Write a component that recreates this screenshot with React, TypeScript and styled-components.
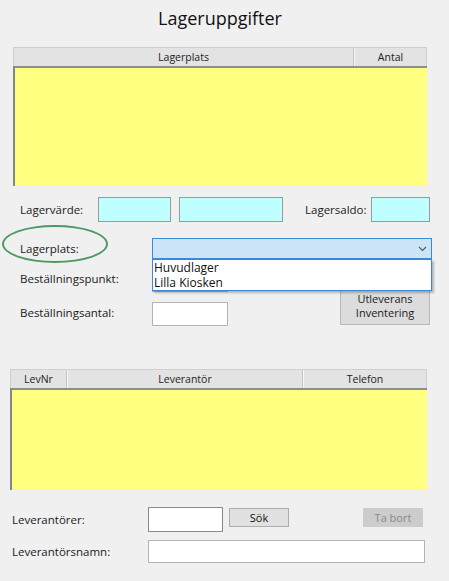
import styled, { createGlobalStyle } from 'styled-components'

const GlobalStyle = createGlobalStyle`
  body {
    margin: 0;
    background: #f0f0f0;
    font-family: "Open Sans", "Noto Sans", "Liberation Sans", sans-serif;
    color: #1a1a1a;
  }
`

const Page = styled.div`
  width: 449px;
  height: 581px;
  background: #f0f0f0;
  overflow: hidden;
`

const Title = styled.h1`
  margin: 0 0 10px 13px;
  width: 414px;
  height: 37px;
  line-height: 37px;
  font-size: 18px;
  font-weight: 400;
  text-align: center;
  color: #111;
`

const Grid = styled.div<{ $left: number; $width: number; $top: number }>`
  margin: ${p => p.$top}px 0 0 ${p => p.$left}px;
  width: ${p => p.$width}px;
`

const HeaderRow = styled.div<{ $cols: string }>`
  display: grid;
  grid-template-columns: ${p => p.$cols};
  height: 19px;
  border: 1px solid #cfcfcf;
  border-bottom: none;
  background: #e3e3e3;
  box-sizing: border-box;
`

const HeaderCell = styled.div`
  display: flex;
  align-items: center;
  justify-content: center;
  font-size: 10.5px;
  color: #222;
  border-left: 1px solid #f7f7f7;
  border-right: 1px solid #c4c4c4;
  &:first-child { border-left: none; }
  &:last-child { border-right: none; }
`

const GridBody = styled.div<{ $height: number }>`
  height: ${p => p.$height}px;
  background: #ffff80;
  border-left: 2px solid #858585;
  border-top: 2px solid #8e8e8e;
  box-sizing: border-box;
`

const Row = styled.div<{ $top: number; $height: number }>`
  position: relative;
  display: flex;
  align-items: center;
  margin-top: ${p => p.$top}px;
  height: ${p => p.$height}px;
`

const Label = styled.span<{ $left?: number; $width?: number }>`
  margin-left: ${p => p.$left ?? 0}px;
  width: ${p => (p.$width ? `${p.$width}px` : 'auto')};
  font-size: 11.5px;
  white-space: nowrap;
  flex-shrink: 0;
`

const ValueBox = styled.div<{ $left: number; $width: number; $height?: number }>`
  margin-left: ${p => p.$left}px;
  width: ${p => p.$width}px;
  height: ${p => p.$height ?? 25}px;
  background: #c0ffff;
  border: 1px solid #9a9a9a;
  box-sizing: border-box;
  flex-shrink: 0;
`

const TextInput = styled.div<{ $left: number; $width: number; $height?: number; $dark?: boolean }>`
  margin-left: ${p => p.$left}px;
  width: ${p => p.$width}px;
  height: ${p => p.$height ?? 24}px;
  background: #fff;
  border: 1px solid ${p => (p.$dark ? '#8a8a8a' : '#b4b4b4')};
  box-sizing: border-box;
  flex-shrink: 0;
`

const Combo = styled.div`
  position: relative;
  width: 280px;
  height: 21px;
  background: #cce4f7;
  border: 1px solid #3a8ad6;
  box-sizing: border-box;
  display: flex;
  align-items: center;
  justify-content: flex-end;
  padding-right: 4px;
  flex-shrink: 0;
`

const DropList = styled.div`
  position: absolute;
  top: 20px;
  left: -1px;
  width: 280px;
  height: 32px;
  background: #fff;
  border: 1px solid #3a8ad6;
  box-sizing: border-box;
  box-shadow: 2px 2px 2px rgba(0, 0, 0, 0.25);
  padding: 0 0 0 1px;
  z-index: 2;
`

const DropItem = styled.div`
  font-size: 12px;
  line-height: 15px;
  height: 15px;
  color: #111;
`

const Ring = styled.div`
  position: absolute;
  left: 2px;
  top: -13px;
  width: 106px;
  height: 38px;
  border: 2px solid #4d9a62;
  border-radius: 50%;
  box-sizing: border-box;
`

const OrderBlock = styled.div`
  display: grid;
  grid-template-columns: 152px 76px 1fr;
  grid-template-rows: 24px 24px;
  row-gap: 10px;
  margin-top: 9px;
`

const OrderLabel = styled.span`
  padding-left: 20px;
  font-size: 11.5px;
  align-self: center;
  margin-top: -4px;
  white-space: nowrap;
`

const OrderInput = styled.div`
  background: #fff;
  border: 1px solid #b4b4b4;
  box-sizing: border-box;
`

const SideButton = styled.div`
  grid-column: 3;
  grid-row: 1 / span 2;
  margin: 5px 0 1px 112px;
  width: 90px;
  padding-bottom: 4px;
  background: #dcdcdc;
  border: 1px solid #b8b8b8;
  box-sizing: border-box;
  display: flex;
  flex-direction: column;
  align-items: center;
  justify-content: flex-end;
  font-size: 11px;
  line-height: 14px;
  color: #222;
`

const Button = styled.div<{ $left: number; $disabled?: boolean }>`
  margin-left: ${p => p.$left}px;
  align-self: flex-start;
  margin-top: 1px;
  width: 60px;
  height: 19px;
  box-sizing: border-box;
  display: flex;
  align-items: center;
  justify-content: center;
  font-size: 11px;
  background: ${p => (p.$disabled ? '#cccccc' : '#e1e1e1')};
  border: 1px solid ${p => (p.$disabled ? '#cccccc' : '#adadad')};
  color: ${p => (p.$disabled ? '#8a8a8a' : '#111')};
  flex-shrink: 0;
`

function Chevron() {
  return (
    <svg width="9" height="6" viewBox="0 0 9 6">
      <polyline points="1,1 4.5,4.5 8,1" fill="none" stroke="#555" strokeWidth="1.1" />
    </svg>
  )
}

export default function App() {
  return (
    <Page>
      <GlobalStyle />
      <Title>Lageruppgifter</Title>

      <Grid $left={13} $width={414} $top={0}>
        <HeaderRow $cols="340px 1fr">
          <HeaderCell>Lagerplats</HeaderCell>
          <HeaderCell>Antal</HeaderCell>
        </HeaderRow>
        <GridBody $height={120} />
      </Grid>

      <Row $top={11} $height={25}>
        <Label $left={20} $width={78}>Lagervärde:</Label>
        <ValueBox $left={0} $width={73} />
        <ValueBox $left={8} $width={104} />
        <Label $left={22}>Lagersaldo:</Label>
        <ValueBox $left={4} $width={59} />
      </Row>

      <Row $top={16} $height={21}>
        <Ring />
        <Label $left={20} $width={132}>Lagerplats:</Label>
        <Combo>
          <Chevron />
          <DropList>
            <DropItem>Huvudlager</DropItem>
            <DropItem>Lilla Kiosken</DropItem>
          </DropList>
        </Combo>
      </Row>

      <OrderBlock>
        <OrderLabel>Beställningspunkt:</OrderLabel>
        <OrderInput />
        <SideButton>
          <span>Utleverans</span>
          <span>Inventering</span>
        </SideButton>
        <OrderLabel>Beställningsantal:</OrderLabel>
        <OrderInput />
      </OrderBlock>

      <Grid $left={10} $width={417} $top={43}>
        <HeaderRow $cols="56px 236px 1fr">
          <HeaderCell>LevNr</HeaderCell>
          <HeaderCell>Leverantör</HeaderCell>
          <HeaderCell>Telefon</HeaderCell>
        </HeaderRow>
        <GridBody $height={102} />
      </Grid>

      <Row $top={17} $height={25}>
        <Label $left={12} $width={136}>Leverantörer:</Label>
        <TextInput $left={0} $width={75} $height={25} $dark />
        <Button $left={6}>Sök</Button>
        <Button $left={74} $disabled>Ta bort</Button>
      </Row>

      <Row $top={8} $height={23}>
        <Label $left={12} $width={136}>Leverantörsnamn:</Label>
        <TextInput $left={0} $width={277} $height={23} />
      </Row>
    </Page>
  )
}
